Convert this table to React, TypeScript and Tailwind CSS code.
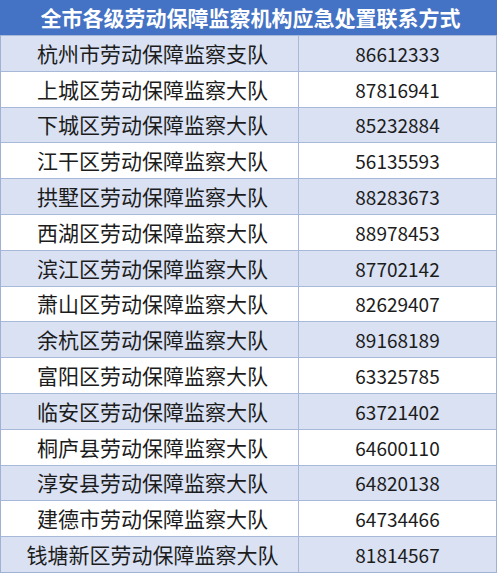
const rows: [string, string][] = [
  ['杭州市劳动保障监察支队', '86612333'],
  ['上城区劳动保障监察大队', '87816941'],
  ['下城区劳动保障监察大队', '85232884'],
  ['江干区劳动保障监察大队', '56135593'],
  ['拱墅区劳动保障监察大队', '88283673'],
  ['西湖区劳动保障监察大队', '88978453'],
  ['滨江区劳动保障监察大队', '87702142'],
  ['萧山区劳动保障监察大队', '82629407'],
  ['余杭区劳动保障监察大队', '89168189'],
  ['富阳区劳动保障监察大队', '63325785'],
  ['临安区劳动保障监察大队', '63721402'],
  ['桐庐县劳动保障监察大队', '64600110'],
  ['淳安县劳动保障监察大队', '64820138'],
  ['建德市劳动保障监察大队', '64734466'],
  ['钱塘新区劳动保障监察大队', '81814567'],
];

export default function App(): JSX.Element {
  return (
    <div
      className="w-[500px] h-[573px] bg-white flex flex-col"
      style={{ fontFamily: '"Noto Sans CJK SC", "Noto Sans", sans-serif' }}
    >
      <div className="h-[35px] shrink-0 w-[497px] bg-[#4472c4] flex items-center justify-center">
        <span className="text-[21px] font-bold text-white leading-none pl-[4px]">
          全市各级劳动保障监察机构应急处置联系方式
        </span>
      </div>
      <div className="flex-1 flex flex-col w-[497px] border-l border-r border-b border-[#9fb2d6]">
        {rows.map(([name, phone], i) => (
          <div
            key={name}
            className={`flex-1 flex border-t border-[#a8b8d8] ${i % 2 === 0 ? 'bg-[#d9e1f2]' : 'bg-white'}`}
          >
            <div className="w-[298px] shrink-0 flex items-center justify-center border-r border-[#a8b8d8] text-[21px] text-[#1c1c1c] leading-none pl-[6px]">
              {name}
            </div>
            <div className="flex-1 flex items-center justify-center text-[19px] text-[#1c1c1c] leading-none">
              {phone}
            </div>
          </div>
        ))}
      </div>
    </div>
  );
}
